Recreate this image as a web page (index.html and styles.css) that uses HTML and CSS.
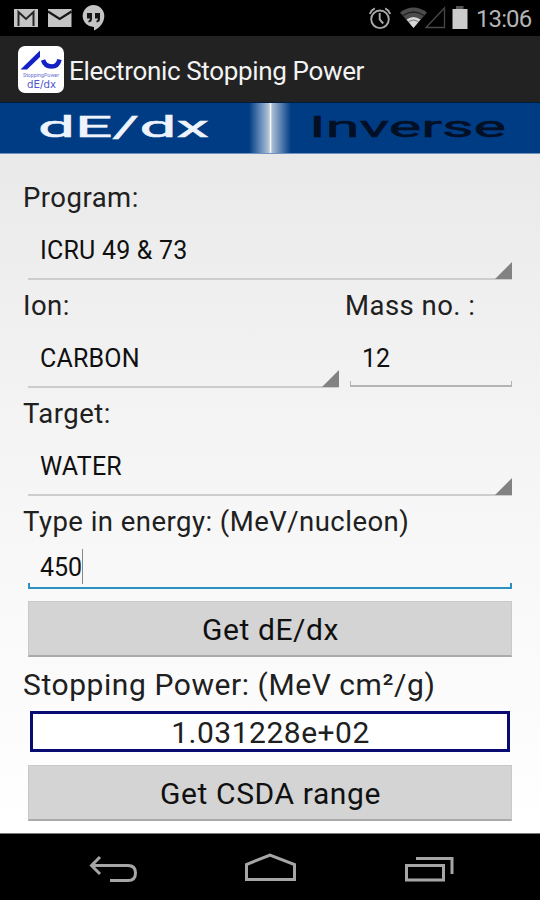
FILE: index.html
```
<!DOCTYPE html>
<html lang="en">
<head>
<meta charset="utf-8">
<title>Electronic Stopping Power</title>
<link rel="stylesheet" href="styles.css">
</head>
<body>
<div class="screen">
  <div class="status">
    <svg class="status-left" width="120" height="36" viewBox="0 0 120 36">
      <path fill="#c4c4c4" d="M14 9h24v18H14z"/>
      <path fill="none" stroke="#252525" stroke-width="2" d="M18.500 26V12l7.500 7 7.500-7v14"/>
      <path fill="#c4c4c4" d="M48 9h23.500v18H48z"/>
      <path fill="none" stroke="#181818" stroke-width="2.300" d="M48 11.500l11.700 7.500 11.800-7.500"/>
      <path fill="#c4c4c4" d="M93.300 5a11 11 0 0 1 11 11c0 7-5 12-10.300 14.500V27A11 11 0 1 1 93.300 5z"/>
      <path fill="#161616" d="M87 13h5v6c0 2-1 3.200-3.500 3.500V20.500c1-.4 1.400-1 1.400-2H87zM95 13h5v6c0 2-1 3.200-3.500 3.500V20.500c1-.4 1.400-1 1.400-2H95z"/>
    </svg>
    <svg class="status-right" width="108" height="36" viewBox="366 0 108 36">
      <g fill="none" stroke="#aaa" stroke-width="1.900">
        <circle cx="380" cy="19.300" r="8.800"/>
        <path d="M379.700 13v6.500l3.500 4M369.800 14q1.500-4 5-5.600M390.200 14q-1.500-4-5-5.600"/>
      </g>
      <path fill="#4c4c4c" d="M400 12.500q13.500-10 27 0L413.500 28z"/>
      <path fill="none" stroke="#202020" stroke-width="1.300" d="M403 15.500q10.500-7 21 0"/>
      <path fill="#d8d8d8" d="M406.500 19.500q7-5 14 0l-7 8.500z"/>
      <path fill="none" stroke="#777" d="M408.500 21.500q5-3 10 0"/>
      <path fill="none" stroke="#484848" stroke-width="1.300" d="M426 27.500L444.500 8v19.500z"/>
      <path fill="#ccc" d="M452.500 9h15v20h-15z"/><path fill="#555" d="M456 6h7.500v3H456z"/>
    </svg>
    <span class="clock">13:06</span>
  </div>
  <div class="appbar">
    <svg class="logo" width="46" height="47" viewBox="0 0 46 47">
      <rect width="46" height="47" rx="7" fill="#fff"/>
      <path fill="#1321c4" d="M2.500 23.500L22 4.500v6.500L9 23.500z"/>
      <path fill="none" stroke="#1321c4" stroke-width="4.500" d="M25 14q2 6.500 8.500 6.500T41.500 13.500"/>
      <text x="5" y="31" class="logo-small" textLength="36" lengthAdjust="spacingAndGlyphs">StoppingPower</text>
      <text x="9" y="42" class="logo-big" textLength="29" lengthAdjust="spacingAndGlyphs">dE/dx</text>
    </svg>
    <span class="title">Electronic Stopping Power</span>
  </div>
  <div class="tabs">
    <svg width="540" height="52" viewBox="0 0 540 52">
      <defs><linearGradient id="glow">
        <stop offset="0" stop-color="#b9cbe2" stop-opacity="0"/>
        <stop offset=".3" stop-color="#b9cbe2" stop-opacity=".6"/>
        <stop offset=".5" stop-color="#c9d3df" stop-opacity=".95"/>
        <stop offset=".7" stop-color="#b9cbe2" stop-opacity=".6"/>
        <stop offset="1" stop-color="#b9cbe2" stop-opacity="0"/>
      </linearGradient></defs>
      <rect x="249" y="1" width="42" height="50" fill="url(#glow)"/>
      <path d="M270.500 1v50" stroke="#f4f6f4" stroke-width="1.600"/>
      <text class="tab on" x="38" y="35" textLength="171" lengthAdjust="spacingAndGlyphs">dE/dx</text>
      <text class="tab" x="309" y="35" textLength="197" lengthAdjust="spacingAndGlyphs">Inverse</text>
    </svg>
  </div>
  <main class="form">
    <div class="label">Program:</div>
    <div class="spinner"><span>ICRU 49 &amp; 73</span></div>
    <div class="pair">
      <div class="ion">
        <div class="label">Ion:</div>
        <div class="spinner"><span>CARBON</span></div>
      </div>
      <div class="mass">
        <div class="label">Mass no. :</div>
        <div class="input"><span>12</span></div>
      </div>
    </div>
    <div class="label">Target:</div>
    <div class="spinner"><span>WATER</span></div>
    <div class="label">Type in energy: (MeV/nucleon)</div>
    <div class="input focus"><span>450</span><i class="caret"></i></div>
    <div class="button b-get">Get dE/dx</div>
    <div class="label big">Stopping Power: (MeV cm²/g)</div>
    <div class="result">1.031228e+02</div>
    <div class="button">Get CSDA range</div>
  </main>
  <div class="nav">
    <svg width="540" height="67" viewBox="0 833 540 67">
      <g fill="none" stroke="#a6a6a6" stroke-width="3">
        <path d="M100 857l-8.500 8.500 8.500 8.500M92 865.500h36q7.500 0 7.500 7.500t-7.500 7.500H110"/>
        <path d="M246.500 879.500V864.500L270 855l24.500 9.500v15z"/>
        <path d="M406.500 865.500h37v14.500h-37zM416 858.500h36V874"/>
      </g>
    </svg>
  </div>
</div>
</body>
</html>
```
FILE: styles.css
```
body { margin: 0; font-family: Roboto, sans-serif; color: #202020; }
svg { display: block; }
.screen { width: 540px; height: 900px; overflow: hidden; display: flex; flex-direction: column; background: #000; white-space: nowrap; }
.status { height: 36px; display: flex; background: #000; }
.status-right { margin-left: 246px; }
.clock { margin-left: 2px; font-size: 24px; letter-spacing: -.9px; line-height: 38px; color: #b4b4b4; }
.appbar { height: 66px; display: flex; align-items: center; background: #222; }
.logo { margin-left: 18px; }
.logo-small { font: 6px Roboto, sans-serif; fill: #6870d0; }
.logo-big { font: 10px "DejaVu Sans", sans-serif; fill: #5058cc; }
.title { margin-left: 5px; font-size: 26px; letter-spacing: -.35px; line-height: 66px; padding-top: 3px; color: #f3f3f3; }
.tabs { height: 52px; background: #003c84; box-shadow: inset 0 1px #001c3c, inset 0 -1px #6f92c0; }
.tab { font: 30px Roboto, sans-serif; fill: #020f25; stroke: #020f25; stroke-width: .5px; }
.tab.on { fill: #eef3fc; stroke: #eef3fc; }
.form { height: 679px; box-sizing: border-box; padding: 26px 28px 0; background: linear-gradient(#e9e9e9, #efefef 20%, #f6f6f6 50%, #fff); display: flex; flex-direction: column; }
.label { height: 33px; line-height: 35px; font-size: 27.5px; letter-spacing: .47px; margin-left: -5px; }
.spinner { height: 67px; box-sizing: border-box; border-bottom: 2px solid #cdcdcd; margin-bottom: 8px; padding-left: 12px; position: relative; font-size: 25px; letter-spacing: .2px; line-height: 75px; color: #101010; }
.spinner::after { content: ""; position: absolute; right: 0; bottom: -1px; width: 17px; height: 17px; background: #828282; clip-path: polygon(100% 0, 100% 100%, 0 100%); }
.pair { display: flex; gap: 11px; }
.ion { width: 311px; }
.mass { flex: 1; }
.input { height: 66px; box-sizing: border-box; line-height: 75px; padding-left: 12px; font-size: 25px; color: #101010; border-bottom: 2px solid #b4b4b4; position: relative; }
.input::before, .input::after { content: ""; position: absolute; bottom: 0; width: 1px; height: 4px; background: #b4b4b4; }
.input::before { left: 0; }
.input::after { right: 0; }
.focus { height: 52px; line-height: 62px; border-bottom: 2px solid #2b90c2; display: flex; }
.focus::before, .focus::after { width: 2px; background: #2b90c2; }
.caret { width: 1px; height: 35px; margin: 12px 0 0; background: #888; }
.button { height: 56px; box-sizing: border-box; border: 1px solid #c9c9c9; border-bottom: 2px solid #aaa; background: #d4d4d4; text-align: center; font-size: 30px; letter-spacing: .6px; text-indent: 1px; line-height: 56px; color: #101010; }
.b-get { margin-top: 12px; }
.label.big { margin-top: 12px; height: 34px; line-height: 32px; font-size: 30px; letter-spacing: .57px; }
.result { margin: 8px 2px 13px; height: 41px; box-sizing: border-box; border: 3px solid #080b72; background: #fff; text-align: center; font-size: 30px; letter-spacing: .5px; text-indent: 1px; line-height: 38px; }
.nav { height: 67px; background: #000; box-shadow: inset 0 1px #777; }
```
